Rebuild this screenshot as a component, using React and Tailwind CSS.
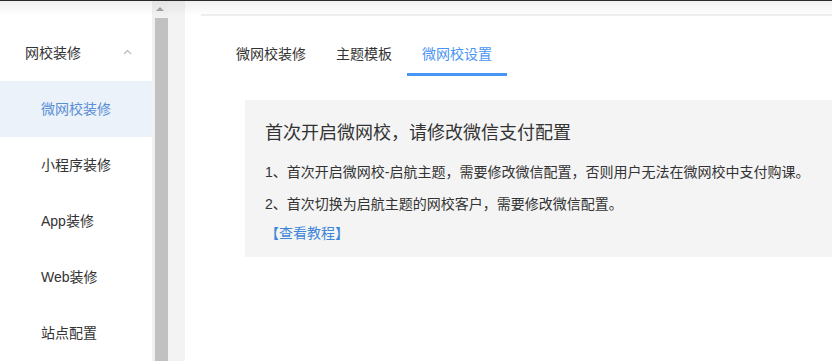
import React from 'react'

const FONT = { fontFamily: '"Liberation Sans", "Noto Sans CJK SC", sans-serif' }

const MENU = ['小程序装修', 'App装修', 'Web装修', '站点配置']
const TABS = ['微网校装修', '主题模板', '微网校设置']

export default function App() {
  return (
    <div className="relative flex w-[832px] h-[361px] overflow-hidden bg-white text-[#333]" style={FONT}>
      {/* top edge + faint shadow */}
      <div className="pointer-events-none absolute inset-x-0 top-0 h-[16px] bg-gradient-to-b from-black/[0.06] to-transparent">
        <div className="h-px bg-[#2b2b2b]" />
      </div>

      {/* Sidebar */}
      <div className="w-[152px] shrink-0 pt-[25px]">
        <div className="flex h-[56px] items-center justify-between pl-[25px] pr-[20px] text-[14px]">
          <span>网校装修</span>
          <svg width="9" height="6" viewBox="0 0 9 6" className="mt-[-2px]">
            <path d="M1 5 L4.5 1.5 L8 5" fill="none" stroke="#b8b8c4" strokeWidth="1.2" />
          </svg>
        </div>
        <div className="flex h-[56px] items-center bg-[#ebf2fa] pl-[41px] text-[14px] text-[#5a8fd6]">
          微网校装修
        </div>
        {MENU.map(m => (
          <div key={m} className="flex h-[56px] items-center pl-[41px] text-[14px]">
            {m}
          </div>
        ))}
      </div>

      {/* Scrollbar */}
      <div className="w-[16px] shrink-0 bg-[#f1f1f1] flex flex-col items-center">
        <div className="flex h-[18px] w-full items-center justify-center">
          <div className="h-0 w-0 border-x-[4px] border-b-[4px] border-x-transparent border-b-[#a3a3a3]" />
        </div>
        <div className="ml-[2px] w-[13px] flex-1 bg-[#c1c1c1]" />
      </div>

      {/* Gutter */}
      <div className="w-[17px] shrink-0 bg-[#f3f3f3]" />

      {/* Main */}
      <div className="flex-1 pl-[16px] pt-[14px]">
        <div className="border-t-2 border-[#eeeeee]" />
        <div className="ml-[20px] mt-[20px] flex">
          {TABS.map((t, i) => (
            <div
              key={t}
              className={`flex h-[40px] items-center border-b-[3px] px-[15px] text-[14px] ${
                i === 2 ? 'border-[#4796f5] text-[#4b95f2]' : 'border-transparent text-[#333]'
              }`}
            >
              {t}
            </div>
          ))}
        </div>

        <div className="ml-[44px] mt-[24px] h-[157px] bg-[#f4f4f4] pl-[20px] pt-[21px]">
          <div className="text-[18px] leading-[24px] text-[#333]">首次开启微网校，请修改微信支付配置</div>
          <div className="mt-[17px] text-[14px] leading-[20px] text-[#333]">
            1、首次开启微网校-启航主题，需要修改微信配置，否则用户无法在微网校中支付购课。
          </div>
          <div className="mt-[12px] text-[14px] leading-[20px] text-[#333]">
            2、首次切换为启航主题的网校客户，需要修改微信配置。
          </div>
          <div className="mt-[9px] text-[14px] leading-[20px] text-[#3d86d8]">【查看教程】</div>
        </div>
      </div>
    </div>
  )
}
